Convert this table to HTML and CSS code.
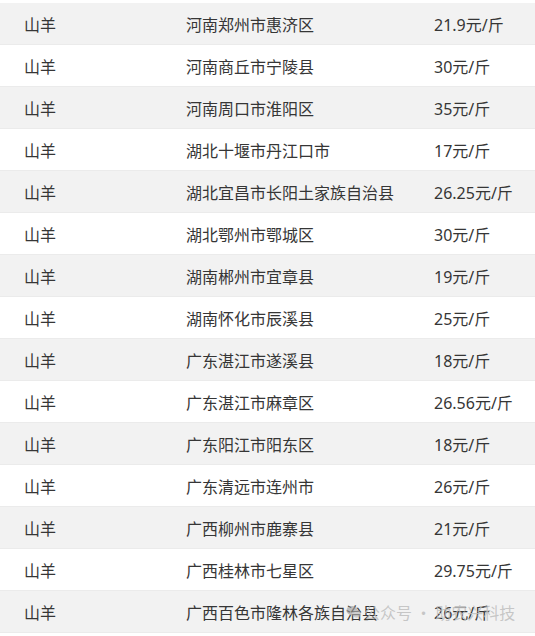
FILE: index.html
```html
<!DOCTYPE html>
<html lang="zh">
<head>
<meta charset="utf-8">
<link rel="stylesheet" href="styles.css">
</head>
<body>
<div class="page">
  <div class="table">
    <div class="row alt"><span>山羊</span><span>河南郑州市惠济区</span><span>21.9元/斤</span></div>
    <div class="row"><span>山羊</span><span>河南商丘市宁陵县</span><span>30元/斤</span></div>
    <div class="row alt"><span>山羊</span><span>河南周口市淮阳区</span><span>35元/斤</span></div>
    <div class="row"><span>山羊</span><span>湖北十堰市丹江口市</span><span>17元/斤</span></div>
    <div class="row alt"><span>山羊</span><span>湖北宜昌市长阳土家族自治县</span><span>26.25元/斤</span></div>
    <div class="row"><span>山羊</span><span>湖北鄂州市鄂城区</span><span>30元/斤</span></div>
    <div class="row alt"><span>山羊</span><span>湖南郴州市宜章县</span><span>19元/斤</span></div>
    <div class="row"><span>山羊</span><span>湖南怀化市辰溪县</span><span>25元/斤</span></div>
    <div class="row alt"><span>山羊</span><span>广东湛江市遂溪县</span><span>18元/斤</span></div>
    <div class="row"><span>山羊</span><span>广东湛江市麻章区</span><span>26.56元/斤</span></div>
    <div class="row alt"><span>山羊</span><span>广东阳江市阳东区</span><span>18元/斤</span></div>
    <div class="row"><span>山羊</span><span>广东清远市连州市</span><span>26元/斤</span></div>
    <div class="row alt"><span>山羊</span><span>广西柳州市鹿寨县</span><span>21元/斤</span></div>
    <div class="row"><span>山羊</span><span>广西桂林市七星区</span><span>29.75元/斤</span></div>
    <div class="row alt"><span>山羊</span><span>广西百色市隆林各族自治县</span><span>26元/斤</span></div>
  </div>
  <div class="watermark">
    <svg class="wm-icon" width="16" height="14" viewBox="0 0 16 14"><ellipse cx="6" cy="5.5" rx="5.5" ry="4.6" fill="#9a9a9a"/><ellipse cx="10.5" cy="8.8" rx="4.6" ry="3.9" fill="#b8b8b8"/></svg>
    <span>公众号 · 助农兴科技</span>
  </div>
</div>
</body>
</html>
```
FILE: styles.css
```css
html, body {
  margin: 0;
  padding: 0;
  background: #ffffff;
}
.page {
  position: relative;
  width: 535px;
  height: 636px;
  overflow: hidden;
  font-family: "Noto Sans", "Noto Sans CJK SC", sans-serif;
  font-size: 16px;
  color: #363636;
}
.table {
  padding-top: 3px;
}
.row {
  display: grid;
  grid-template-columns: 162px 248px 1fr;
  align-items: center;
  height: 41px;
  padding-left: 24px;
  border-bottom: 1px solid #ebebeb;
  background: #ffffff;
  white-space: nowrap;
}
.row.alt {
  background: #f2f2f2;
}
.watermark {
  position: absolute;
  left: 346px;
  top: 602px;
  display: flex;
  align-items: center;
  gap: 2px;
  font-family: "Noto Sans CJK SC", sans-serif;
  font-size: 16px;
  line-height: 20px;
  color: rgba(190, 190, 190, 0.85);
  white-space: nowrap;
}
.wm-icon {
  opacity: 0.6;
}
```
